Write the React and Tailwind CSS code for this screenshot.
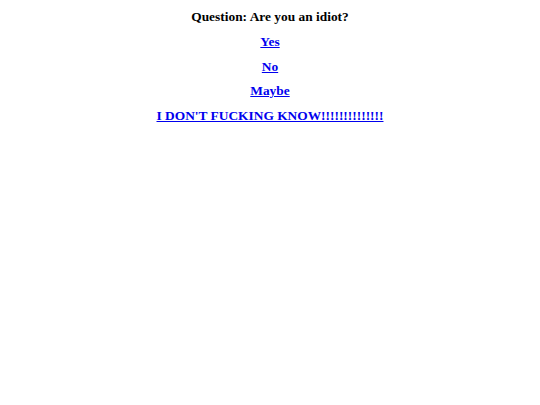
import React from 'react';

const answers = ['Yes', 'No', 'Maybe', "I DON'T FUCKING KNOW!!!!!!!!!!!!!!"];

const App = () => (
  <div className="min-h-screen bg-white pt-[5px] text-center font-['Liberation_Serif',serif] text-[13.4px] font-bold leading-[24.75px]">
    <div className="text-black">Question: Are you an idiot?</div>
    {answers.map((answer) => (
      <div key={answer}>
        <a href="#" className="text-[#0000ee] underline">
          {answer}
        </a>
      </div>
    ))}
  </div>
);

export default App;
